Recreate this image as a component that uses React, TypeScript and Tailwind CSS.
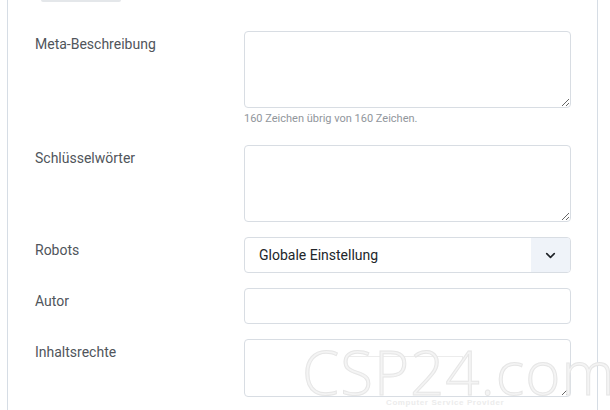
import { ChevronDown } from "lucide-react";

const font = { fontFamily: "Roboto, 'Noto Sans', sans-serif" };

function Label({ children }: { children: string }) {
  return <div className="pt-[3px] text-[14px] leading-[20px] text-[#50555b]">{children}</div>;
}

function Area({ h }: { h: string }) {
  return <textarea className={`block w-full rounded-[4px] border border-[#d8dde3] bg-white ${h}`} />;
}

export default function App() {
  return (
    <div className="relative h-[410px] w-[610px] overflow-hidden bg-white" style={font}>
      <div className="ml-[7px] mr-[12px] h-[420px] border-x border-[#d6dde5]">
        <div className="ml-[33px] h-[2px] w-[80px] rounded-b bg-[#e4e7ea]" />
        <div className="grid grid-cols-[209px_327px] px-[27px] pt-[29px]">
          <Label>Meta-Beschreibung</Label>
          <div className="mb-[18px]">
            <Area h="h-[77px]" />
            <p className="mt-[3px] text-[11px] leading-[16px] text-[#91969c]">160 Zeichen übrig von 160 Zeichen.</p>
          </div>

          <Label>Schlüsselwörter</Label>
          <div className="mb-[15px]">
            <Area h="h-[77px]" />
          </div>

          <Label>Robots</Label>
          <div className="mb-[15px] flex h-[36px] overflow-hidden rounded-[4px] border border-[#d8dde3]">
            <span className="flex flex-1 items-center pl-[14px] text-[14px] text-[#22262a]">Globale Einstellung</span>
            <span className="flex w-[39px] items-center justify-center bg-[#eff3f9]">
              <ChevronDown size={15} strokeWidth={2.6} className="text-[#1f2328]" />
            </span>
          </div>

          <Label>Autor</Label>
          <div className="mb-[15px] h-[36px] rounded-[4px] border border-[#d8dde3]" />

          <Label>Inhaltsrechte</Label>
          <div>
            <Area h="h-[58px]" />
          </div>
        </div>
      </div>

      {/* watermark */}
      <div className="pointer-events-none absolute left-[302px] top-[350px] w-[320px] select-none">
        <div className="ml-[44px] mt-[6px] h-[3px] w-[117px] border-x border-t border-[#ececec]" />
        <div
          className="-mt-[10px] h-[46px] text-[60px] font-light leading-[46px] tracking-[1px] text-[#f4f4f4]"
          style={{ fontFamily: "'Open Sans', sans-serif", WebkitTextStroke: "1px #e6e6e6" }}
        >
          CSP24.com
        </div>
        <div className="ml-[84px] mt-[3px] text-[8px] font-bold leading-[9px] tracking-[0.6px] text-[#ececec]" style={{ fontFamily: "'Liberation Sans', sans-serif" }}>
          Computer Service Provider
        </div>
      </div>
    </div>
  );
}
